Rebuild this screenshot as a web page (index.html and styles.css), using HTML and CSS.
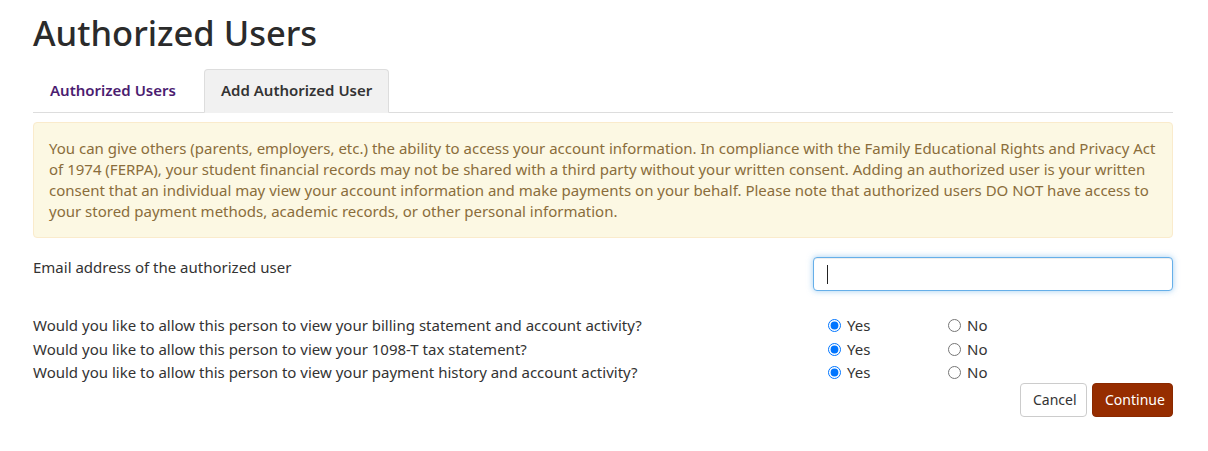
FILE: index.html
```html
<!DOCTYPE html>
<html lang="en">
<head>
<meta charset="utf-8">
<title>Authorized Users</title>
<link rel="stylesheet" href="styles.css">
</head>
<body>
<div class="container">
  <h1 class="page-title">Authorized Users</h1>
  <ul class="tabs">
    <li class="tab"><a class="tab-link" href="#">Authorized Users</a></li>
    <li class="tab tab-active"><a class="tab-link" href="#">Add Authorized User</a></li>
  </ul>
  <div class="alert">
    You can give others (parents, employers, etc.) the ability to access your account information. In compliance with the Family Educational Rights and Privacy Act of 1974 (FERPA), your student financial records may not be shared with a third party without your written consent. Adding an authorized user is your written consent that an individual may view your account information and make payments on your behalf. Please note that authorized users DO NOT have access to your stored payment methods, academic records, or other personal information.
  </div>
  <form class="form">
    <div class="row email-row">
      <label class="col-label" for="email">Email address of the authorized user</label>
      <div class="col-field">
        <div class="input-wrap">
          <input class="text-input" id="email" type="email">
          <span class="caret"></span>
        </div>
      </div>
    </div>
    <div class="questions">
      <div class="row q-row">
        <div class="col-label">Would you like to allow this person to view your billing statement and account activity?</div>
        <div class="col-field radios">
          <label class="radio"><input type="radio" name="q1" checked><span>Yes</span></label>
          <label class="radio"><input type="radio" name="q1"><span>No</span></label>
        </div>
      </div>
      <div class="row q-row">
        <div class="col-label">Would you like to allow this person to view your 1098-T tax statement?</div>
        <div class="col-field radios">
          <label class="radio"><input type="radio" name="q2" checked><span>Yes</span></label>
          <label class="radio"><input type="radio" name="q2"><span>No</span></label>
        </div>
      </div>
      <div class="row q-row">
        <div class="col-label">Would you like to allow this person to view your payment history and account activity?</div>
        <div class="col-field radios">
          <label class="radio"><input type="radio" name="q3" checked><span>Yes</span></label>
          <label class="radio"><input type="radio" name="q3"><span>No</span></label>
        </div>
      </div>
    </div>
    <div class="actions">
      <button type="button" class="btn btn-default">Cancel</button>
      <button type="button" class="btn btn-primary">Continue</button>
    </div>
  </form>
</div>
</body>
</html>
```
FILE: styles.css
```css
* { box-sizing: border-box; }
html, body { margin: 0; padding: 0; background: #fff; }
body {
  font-family: "Noto Sans", "Open Sans", sans-serif;
  font-size: 15px;
  line-height: 21px;
  color: #333;
}
.container {
  width: 1140px;
  margin-left: 33px;
}
.page-title {
  margin: 13px 0 0;
  font-size: 34.5px;
  line-height: 40px;
  font-weight: 500;
  color: #2b2b2b;
}
.tabs {
  list-style: none;
  margin: 16px 0 0;
  padding: 0;
  display: flex;
  border-bottom: 1px solid #ddd;
}
.tab { margin-bottom: -1px; }
.tab-link {
  display: block;
  padding: 10px 16px 11px;
  line-height: 21px;
  font-weight: 600;
  text-decoration: none;
  color: #4b1c70;
  border: 1px solid transparent;
  border-radius: 4px 4px 0 0;
}
.tab:first-child .tab-link { width: 171px; }
.tab-active .tab-link {
  color: #333;
  background: #f1f1f1;
  border-color: #ddd;
  border-bottom-color: #f1f1f1;
}
.alert {
  margin-top: 9px;
  padding: 15px;
  background: #fcf8e3;
  border: 1px solid #faebcc;
  border-radius: 4px;
  color: #8a6d3b;
}
.row { display: flex; }
.col-label { width: 780px; flex: none; }
.col-field { width: 360px; flex: none; }
.email-row { margin-top: 19px; }
.input-wrap { position: relative; }
.text-input {
  display: block;
  width: 100%;
  height: 34px;
  padding: 6px 12px;
  font: inherit;
  border: 1px solid #66afe9;
  border-radius: 4px;
  outline: none;
  box-shadow: inset 0 1px 1px rgba(0,0,0,.075), 0 0 6px rgba(102,175,233,.6);
}
.caret {
  position: absolute;
  left: 14px;
  top: 8px;
  width: 1px;
  height: 19px;
  background: #222;
}
.questions { margin-top: 23px; }
.q-row { line-height: 23.5px; height: 23.5px; }
.radios { display: flex; align-items: center; padding-left: 15px; }
.radio {
  display: flex;
  align-items: center;
  width: 120px;
}
.radio input {
  margin: 0 6px 0 0;
  width: 13px;
  height: 13px;
  accent-color: #0075ff;
}
.actions {
  display: flex;
  justify-content: flex-end;
  gap: 5px;
  margin-top: -2px;
}
.btn {
  font-family: inherit;
  font-size: 14px;
  line-height: 20px;
  padding: 6px 12px;
  border-radius: 4px;
  border: 1px solid #ccc;
  cursor: pointer;
}
.btn-default { background: #fff; color: #333; width: 67px; }
.btn-primary { background: #962d00; border-color: #8a2900; color: #fff; width: 81px; }
```
